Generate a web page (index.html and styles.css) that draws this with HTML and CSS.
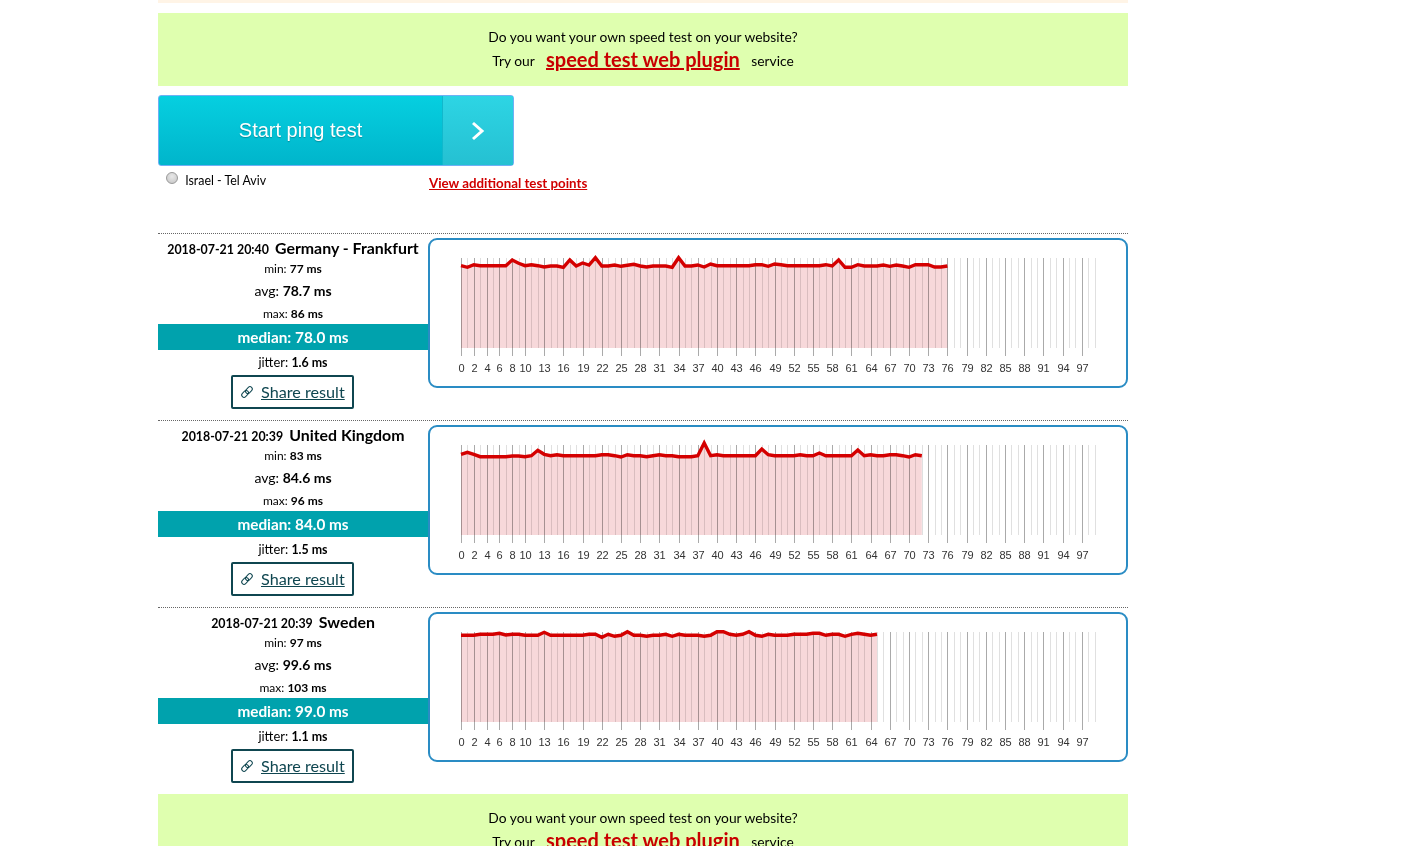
FILE: index.html
```html
<!DOCTYPE html>
<html lang="en">
<head>
  <meta charset="UTF-8">
  <title>Ping test</title>
  <link rel="stylesheet" href="styles.css">
</head>
<body>
  <div class="page">
    <div class="top-strip"></div>
    <div class="promo">
      <div>Do you want your own speed test on your website?</div>
      <div class="promo-line">Try our <a class="promo-link" href="#">speed test web plugin</a> service</div>
    </div>
    <div class="start-row">
      <a class="start-btn" href="#">
        <span class="start-label">Start ping test</span>
        <span class="start-arrow">
          <svg width="14" height="20" viewBox="0 0 14 20"><path d="M2 2l9 8-9 8" fill="none" stroke="#fff" stroke-width="3"/></svg>
        </span>
      </a>
    </div>
    <div class="points-row">
      <label class="point"><input type="radio" name="point"> Israel - Tel Aviv</label>
      <a class="more-points" href="#">View additional test points</a>
    </div>

    <div id="results"></div>

    <div class="promo promo-bottom">
      <div>Do you want your own speed test on your website?</div>
      <div class="promo-line">Try our <a class="promo-link" href="#">speed test web plugin</a> service</div>
    </div>
  </div>
  <script src="charts.js"></script>
</body>
</html>
```
FILE: styles.css
```css
html, body {
  height: 846px;
  overflow: hidden;
}
body {
  margin: 0;
  background: #fff;
  color: #000;
  font-family: "Lato", "Open Sans", Arial, sans-serif;
  font-size: 13.8px;
}
.page {
  width: 970px;
  margin-left: 158px;
}
.top-strip {
  height: 3px;
  background: #fff4e6;
  margin-bottom: 10px;
}
.promo {
  height: 73px;
  box-sizing: border-box;
  padding-top: 12px;
  background: #dfffaf;
  text-align: center;
  line-height: 24px;
}
.promo-line {
  height: 24px;
}
.promo-link {
  margin: 0 8px;
  color: #c80000;
  font-size: 20px;
  font-weight: bold;
  line-height: 20px;
  vertical-align: -1px;
}
.start-row {
  margin-top: 9px;
}
.start-btn {
  display: flex;
  width: 356px;
  height: 71px;
  box-sizing: border-box;
  border: 1px solid #6fb0f5;
  border-radius: 3px;
  background: linear-gradient(#06cfe0, #00b5cb);
  color: #fff;
  text-decoration: none;
}
.start-label {
  flex: 1;
  line-height: 68px;
  text-align: center;
  font-family: "Liberation Sans", Arial, sans-serif;
  font-size: 20px;
  text-shadow: 0 1px 1px rgba(0,0,0,0.25);
}
.start-arrow {
  display: flex;
  align-items: center;
  justify-content: center;
  width: 70px;
  background: linear-gradient(#2dd5e4, #25c0d2);
  border-left: 1px solid #10b8cc;
}
.points-row {
  display: flex;
  height: 67px;
}
.point {
  width: 271px;
  padding-left: 8px;
  box-sizing: border-box;
  font-size: 12.4px;
  line-height: 30px;
}
.point input {
  appearance: none;
  width: 12px;
  height: 12px;
  margin: 0 4px 0 0;
  vertical-align: 1px;
  border: 1px solid #999;
  border-radius: 50%;
  background: radial-gradient(circle at 50% 35%, #e8e8e8, #c4c4c4);
}
.more-points {
  margin-top: 9px;
  color: #d00000;
  font-size: 13.3px;
  font-weight: bold;
  line-height: 16px;
  height: 16px;
}
.result {
  display: flex;
  height: 187px;
  box-sizing: border-box;
  padding-top: 4px;
  border-top: 1px dotted #666;
}
.stats {
  width: 270px;
  text-align: center;
}
.stats-title {
  font-size: 12.4px;
  font-weight: bold;
  line-height: 20px;
}
.stats-place {
  margin-left: 3px;
  font-size: 15.9px;
}
.stat {
  font-size: 12px;
  line-height: 18px;
}
.stat b {
  font-weight: bold;
}
.stat-big {
  font-size: 14px;
  line-height: 25px;
}
.stat-max {
  line-height: 21px;
}
.stat-median {
  background: #00a2ad;
  color: #fff;
  font-size: 15.3px;
  font-weight: bold;
  line-height: 26px;
}
.stat-jitter {
  font-size: 12.9px;
  line-height: 24px;
}
.stat-jitter b {
  font-size: 12.4px;
}
.share {
  display: inline-flex;
  align-items: center;
  gap: 7px;
  width: 123px;
  height: 34px;
  box-sizing: border-box;
  margin-right: 1px;
  padding: 0 0 2px 7px;
  border: 2px solid #0f4650;
  border-radius: 2px;
  color: #0f4650;
  font-size: 16.2px;
  text-align: left;
}
.share a {
  color: #0f4650;
}
.share svg {
  margin-top: 2px;
}
.chart-box {
  width: 700px;
  height: 150px;
  box-sizing: border-box;
  border: 2px solid #2a8cc4;
  border-radius: 9px;
  background: #fff;
}
.chart {
  display: block;
  overflow: visible;
}
.tick-label {
  font-family: "Liberation Sans", Arial, sans-serif;
  font-size: 11px;
  fill: #333;
  text-anchor: middle;
}
```
FILE: charts.js
```js
// line values are pixels below the top of the plot, one per run
var charts = [
  { date: '2018-07-21 20:40', place: 'Germany - Frankfurt', min: 77, avg: '78.7', max: 86, median: '78.0', jitter: '1.6',
    line: [7.7,9.3,6.7,7.7,7.7,7.7,7.7,7.7,2,5.3,7.7,6.7,7.7,9,8,8,9.3,2,8,5,7,-0.3,8,8,7,8.3,7.3,6.3,8,9,8,8,8,9.3,-0.3,8,8,7,9,6,7.7,7.7,7.7,7.7,7.7,7.7,6.7,6.7,8.3,6,6.7,7.7,7.7,7.7,7.7,7.7,7.7,6.7,8,2,9.3,9.3,6.7,8,8,8,7,8.3,7,8,9.3,6.7,6.7,6.7,9,9,8] },
  { date: '2018-07-21 20:39', place: 'United Kingdom', min: 83, avg: '84.6', max: 96, median: '84.0', jitter: '1.5',
    line: [9.3,7.3,9.3,11.7,11.7,11.7,11.7,11.7,11,11,11.7,10.7,5.3,9.3,10.7,9.7,10.7,10.7,10.7,10.7,10.7,10.7,9.7,9.7,10.7,12,9.7,10.7,10.7,11.7,10.7,9.7,10.7,10.7,11.7,11.7,11.7,10.7,-2,10.7,9.7,10.7,10.7,10.7,10.7,10.7,10.7,4,9.7,10.7,10.7,10.7,10.7,9.7,10.7,10.7,8,10.7,10.7,10.7,10.7,10.7,5,10.7,9.7,10.7,10.7,9.7,9.7,10.7,12,9.7,10.7] },
  { date: '2018-07-21 20:39', place: 'Sweden', min: 97, avg: '99.6', max: 103, median: '99.0', jitter: '1.1',
    line: [3.3,3.3,3.3,2.3,2.3,2.3,1.3,3,2.3,2.3,3.3,3.3,3.3,0.3,3.3,3.3,3.3,3.3,3.3,3.3,2.3,2.3,5.3,2.3,4.3,3.3,-0.3,3.3,3.3,4.3,3.3,3.3,2.3,4.3,2.3,3.3,3.3,3.3,4.3,3.3,-0.3,-0.3,2.3,3.3,2.3,-0.3,3.3,4.3,2.3,3.3,3.3,3.3,2.3,2.3,2.3,1.3,1.3,3.3,2.3,2.3,4.3,2.3,1.3,2.3,3.3,2.3] }
];

var NS = 'http://www.w3.org/2000/svg';
var STEP = 6.4;
var LEFT = 31;
var TOP = 18;

function el(name, attrs, parent) {
  var e = document.createElementNS(NS, name);
  for (var k in attrs) e.setAttribute(k, attrs[k]);
  parent.appendChild(e);
  return e;
}

function drawChart(data) {
  var svg = document.createElementNS(NS, 'svg');
  svg.setAttribute('class', 'chart');
  svg.setAttribute('width', 696);
  svg.setAttribute('height', 146);
  var baseY = TOP + 90;
  var lastX = LEFT + (data.line.length - 1) * STEP;

  var pts = data.line.map(function (v, i) {
    return (LEFT + i * STEP).toFixed(1) + ',' + (TOP + v).toFixed(1);
  });
  el('polygon', { points: pts.join(' ') + ' ' + lastX.toFixed(1) + ',' + baseY + ' ' + LEFT + ',' + baseY, fill: '#f7d8da' }, svg);

  // label every other tick up to 10, then every third
  var labelled = {};
  for (var n = 0; n <= 10; n += 2) labelled[n] = true;
  for (n = 13; n <= 97; n += 3) labelled[n] = true;

  for (var i = 0; i < 100; i++) {
    var x = Math.round(LEFT + i * STEP) + 0.5;
    var big = labelled[i];
    el('line', {
      x1: x, x2: x, y1: TOP, y2: big ? baseY + 8 : baseY,
      stroke: big ? '#aaa' : '#e0e0e0', 'stroke-width': 1,
      style: 'mix-blend-mode:multiply'
    }, svg);
    if (big) {
      var t = el('text', { x: x, y: baseY + 24, 'class': 'tick-label' }, svg);
      t.textContent = i;
    }
  }

  el('polyline', { points: pts.join(' '), fill: 'none', stroke: '#d40000', 'stroke-width': 3.4, 'stroke-linejoin': 'miter' }, svg);
  return svg;
}

var results = document.getElementById('results');
charts.forEach(function (c) {
  var row = document.createElement('div');
  row.className = 'result';
  row.innerHTML =
    '<div class="stats">' +
      '<div class="stats-title">' + c.date + ' <span class="stats-place">' + c.place + '</span></div>' +
      '<div class="stat">min: <b>' + c.min + ' ms</b></div>' +
      '<div class="stat stat-big">avg: <b>' + c.avg + ' ms</b></div>' +
      '<div class="stat stat-max">max: <b>' + c.max + ' ms</b></div>' +
      '<div class="stat-median">median: ' + c.median + ' ms</div>' +
      '<div class="stat stat-jitter">jitter: <b>' + c.jitter + ' ms</b></div>' +
      '<div class="share"><svg width="14" height="14" viewBox="0 0 14 14" fill="none" stroke="#0f4650" stroke-width="1"><g transform="rotate(-45 7 7)"><rect x="0.5" y="4.7" width="7.6" height="4.6" rx="2.3"/><rect x="5.9" y="4.7" width="7.6" height="4.6" rx="2.3"/></g></svg><a href="#">Share result</a></div>' +
    '</div>' +
    '<div class="chart-box"></div>';
  row.querySelector('.chart-box').appendChild(drawChart(c));
  results.appendChild(row);
});
```
